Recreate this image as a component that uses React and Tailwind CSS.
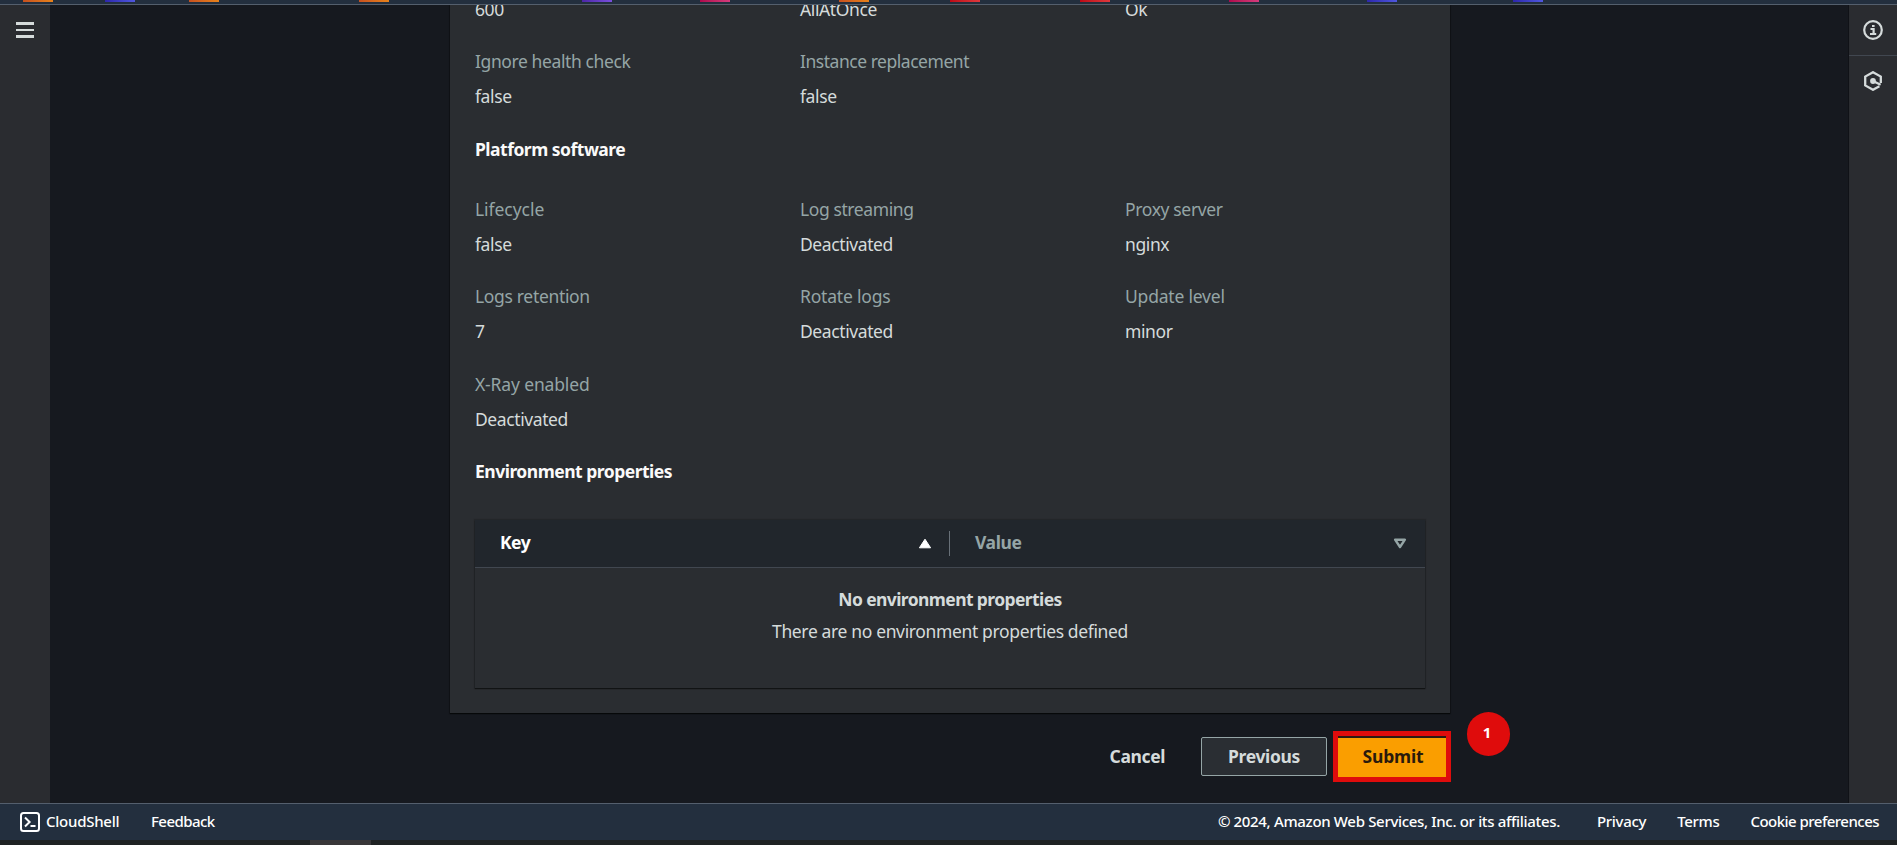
const SERVICE_TABS = [
  { left: 23, color: 'from-[#c7511f] to-[#e8821a]' },
  { left: 105, color: 'from-[#2e27ad] to-[#5057e0]' },
  { left: 189, color: 'from-[#c7511f] to-[#e8821a]' },
  { left: 359, color: 'from-[#c7511f] to-[#e8821a]' },
  { left: 582, color: 'from-[#4d27a8] to-[#7a4fdd]' },
  { left: 700, color: 'from-[#b0084d] to-[#d63a7c]' },
  { left: 839, color: 'from-[#c7511f] to-[#e8821a]' },
  { left: 950, color: 'from-[#bd0816] to-[#e0373c]' },
  { left: 1080, color: 'from-[#bd0816] to-[#e0373c]' },
  { left: 1229, color: 'from-[#b0084d] to-[#d63a7c]' },
  { left: 1367, color: 'from-[#2e27ad] to-[#5057e0]' },
  { left: 1513, color: 'from-[#2e27ad] to-[#5057e0]' },
];

const SOFTWARE = [
  ['Lifecycle', 'false', 'tracking-[-0.05px]'],
  ['Log streaming', 'Deactivated', 'tracking-[-0.4px]'],
  ['Proxy server', 'nginx', 'tracking-[-0.35px]'],
  ['Logs retention', '7', 'tracking-[-0.33px]'],
  ['Rotate logs', 'Deactivated', 'tracking-[-0.2px]'],
  ['Update level', 'minor', 'tracking-[-0.2px]'],
  ['X-Ray enabled', 'Deactivated', 'tracking-[-0.15px]'],
];

function Field({ label, value, tracking }) {
  return (
    <div className="flex flex-col gap-[7.5px]">
      <div className={'text-[#95a5a6] ' + (tracking || '')}>{label}</div>
      <div>{value}</div>
    </div>
  );
}

function Heading({ children }) {
  return <h3 className="font-bold tracking-[-0.5px] text-[#fafafa]">{children}</h3>;
}

function TopStrip() {
  return (
    <header className="relative h-[5px] shrink-0 border-b border-[#545f6d] bg-[#232f3e]">
      {SERVICE_TABS.map((t) => (
        <span key={t.left} className={'absolute top-0 h-[2px] w-[30px] bg-linear-to-r ' + t.color} style={{ left: t.left }} />
      ))}
    </header>
  );
}

function EnvironmentTable() {
  return (
    <div className="mt-[35px] flex h-[168px] flex-col bg-[#2a2d31] shadow-[0_1px_1px_0_rgba(0,0,0,0.5),0_0_1px_1px_rgba(0,0,0,0.15)]">
      <div className="flex h-12 items-center border-b border-[#414750] bg-[#21262c] pb-px font-bold">
        <div className="flex w-[474px] items-center justify-between pr-[17px] pl-[25px]">
          <span className="pb-px tracking-[-0.5px] text-white">Key</span>
          <svg width="14" height="11" viewBox="0 0 14 11">
            <path d="M7 1.2 12.6 9.8H1.4Z" fill="#fff" stroke="#fff" strokeWidth="1" strokeLinejoin="round" />
          </svg>
        </div>
        <div className="h-[25px] w-px bg-[#687078]" />
        <div className="flex flex-1 items-center justify-between pr-[18px] pl-[25px]">
          <span className="pb-px tracking-[-0.4px] text-[#95a5a6]">Value</span>
          <svg width="14" height="11" viewBox="0 0 14 11">
            <path d="M7 9 11.9 1.7H2.1Z" fill="none" stroke="#95a5a6" strokeWidth="2.4" strokeLinejoin="round" />
          </svg>
        </div>
      </div>
      <div className="flex flex-col items-center gap-[4.5px] pt-[18px]">
        <div className="font-bold tracking-[-0.6px]">No environment properties</div>
        <div className="tracking-[-0.36px]">There are no environment properties defined</div>
      </div>
    </div>
  );
}

function Actions() {
  return (
    <div className="mt-[18px] flex h-[51px] items-center justify-end font-bold">
      <button className="mr-[36px] tracking-[-0.4px]">Cancel</button>
      <button className="mr-[6px] h-[39px] w-[126px] rounded-[2px] border border-[#95a5a6] bg-[#2a2e33] tracking-[-0.35px]">
        Previous
      </button>
      <div className="relative -mr-px h-[51px] w-[118px] border-[5px] border-[#df0c0c] bg-[#2a1a14] pt-[2px]">
        <button className="h-[39px] w-full bg-[#fa9e00] pb-0.5 pl-0.5 tracking-[-0.2px] text-[#2a1a0c]">Submit</button>
        <span className="absolute -top-[24px] left-[128.5px] flex size-[43.5px] items-center justify-center rounded-full bg-[#df0c0c] pr-[3px] pb-0.5 text-[15px] text-white">
          1
        </span>
      </div>
    </div>
  );
}

function Footer() {
  return (
    <footer className="shrink-0 font-medium text-white">
      <div className="flex h-[37px] items-center border-t border-[#545f6d] bg-[#232f3e] pr-[18px] pl-5 text-[15px] whitespace-nowrap">
        <svg width="20" height="20" viewBox="0 0 20 20" fill="none" stroke="#fff" strokeWidth="2">
          <rect x="1" y="1" width="18" height="18" rx="2.5" />
          <path d="M5 5.5 9.6 10 5 14.5M10.5 14h5" />
        </svg>
        <span className="ml-[6px] w-[105px] tracking-[-0.25px]">CloudShell</span>
        <span className="tracking-[-0.55px]">Feedback</span>
        <span className="ml-auto tracking-[-0.33px]">© 2024, Amazon Web Services, Inc. or its affiliates.</span>
        <span className="ml-[37px] tracking-[-0.3px]">Privacy</span>
        <span className="ml-[31px] tracking-[-0.3px]">Terms</span>
        <span className="ml-[31px] tracking-[-0.53px]">Cookie preferences</span>
      </div>
      <div className="h-[5px] bg-[#1f2223]">
        <div className="ml-[310px] h-full w-[61px] bg-[#393739]" />
      </div>
    </footer>
  );
}

export default function App() {
  return (
    <div className="flex h-[845px] w-[1897px] flex-col overflow-hidden bg-[#16191f] font-['Noto_Sans',sans-serif] text-[17.5px] leading-[27.5px] tracking-[-0.4px] text-[#d5dbdb]">
      <TopStrip />
      <div className="flex min-h-0 flex-1">
        <aside className="w-[50px] shrink-0 bg-[#2a2c30] pt-[17px] pl-4">
          <div className="flex w-[18px] flex-col gap-1">
            <span className="h-[2.5px] bg-[#d5dbdb]" />
            <span className="h-[2.5px] bg-[#d5dbdb]" />
            <span className="h-[2.5px] bg-[#d5dbdb]" />
          </div>
        </aside>
        <main className="flex-1 overflow-hidden pl-[400px]">
          <div className="w-[1000px]">
            <section className="flow-root h-[708px] bg-[#2a2d31] px-[25px] shadow-[0_1px_1px_0_rgba(0,0,0,0.6),0_0_1px_1px_rgba(0,0,0,0.2)]">
              <div className="-mt-[9px] grid grid-cols-[325px_325px_1fr]">
                <div>600</div>
                <div>AllAtOnce</div>
                <div>Ok</div>
              </div>
              <div className="mt-[24px] grid grid-cols-[325px_325px_1fr]">
                <Field label="Ignore health check" value="false" />
                <Field label="Instance replacement" value="false" tracking="tracking-[-0.47px]" />
              </div>
              <div className="mt-[26px]">
                <Heading>Platform software</Heading>
              </div>
              <div className="mt-[32px] mb-[24.5px] grid grid-cols-[325px_325px_1fr] gap-y-[25px]">
                {SOFTWARE.map(([label, value, tracking]) => (
                  <Field key={label} label={label} value={value} tracking={tracking} />
                ))}
              </div>
              <Heading>Environment properties</Heading>
              <EnvironmentTable />
            </section>
            <Actions />
          </div>
        </main>
        <aside className="flex w-[49px] shrink-0 flex-col items-center border-l border-[#101217] bg-[#2a2c30]">
          <div className="flex h-[51px] w-full items-center justify-center border-b border-[#414750]">
            <svg width="20" height="20" viewBox="0 0 20 20" fill="none" stroke="#d5dbdb" strokeWidth="2.2">
              <circle cx="10" cy="10" r="8.8" />
              <path d="M7.5 9H10.6V14M7 14H13.2M9 6H11.6" />
            </svg>
          </div>
          <div className="flex h-[49px] items-center">
            <svg width="20" height="20" viewBox="0 0 20 20" fill="none" stroke="#d5dbdb" strokeWidth="2.3">
              <path d="M17.8 12V5.6L10 1.2 2.2 5.6V14.4L10 18.8 16.4 15.2" />
              <circle cx="10" cy="10" r="2.9" fill="#d5dbdb" stroke="none" />
              <path d="M10 10 17.6 13.8" />
            </svg>
          </div>
        </aside>
      </div>
      <Footer />
    </div>
  );
}
